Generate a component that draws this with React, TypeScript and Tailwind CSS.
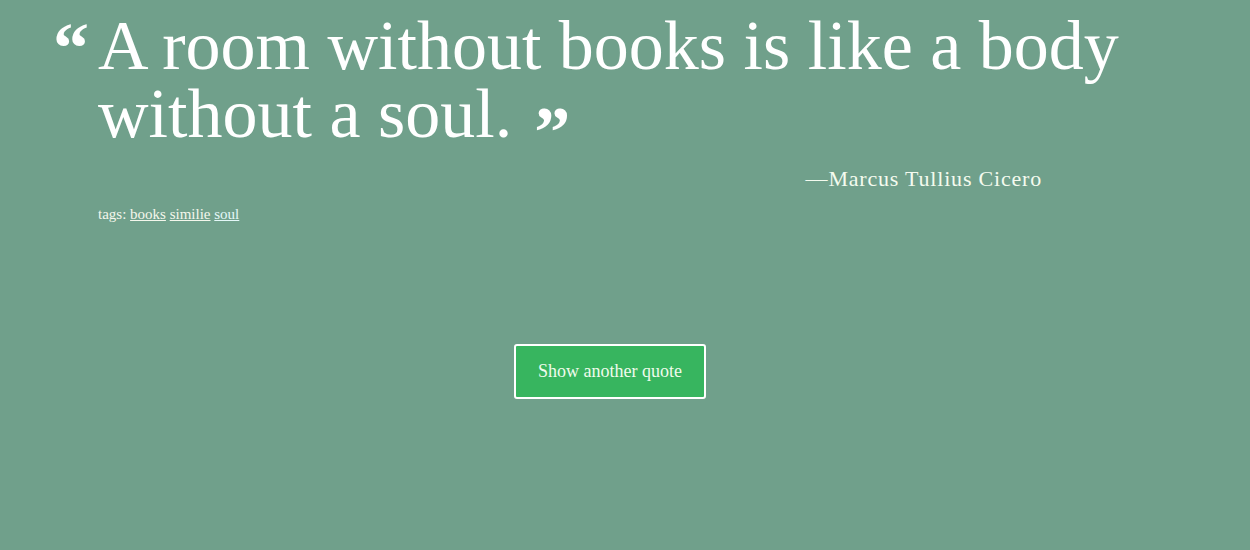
export default function App() {
  return (
    <div className="min-h-[550px] w-full bg-[#70a08b] text-white font-['Liberation_Serif',serif]">
      {/* quote block */}
      <div className="pl-[53px] pt-[12px]">
        <div className="flex items-start">
          <span className="w-[45px] shrink-0 text-[72px] leading-[72px] font-bold">&ldquo;</span>
          <p className="text-[70px] leading-[68px]">
            A room without books is like a body
            <br />
            without a soul.
            <span className="ml-[22px] inline-block align-top text-[72px] leading-[72px] font-bold translate-y-[16px]">&rdquo;</span>
          </p>
        </div>
        <div className="w-[989px] text-right text-[22px] tracking-[0.8px] text-[#f4fbef] mt-[10px]">
          &mdash;Marcus Tullius Cicero
        </div>
        <div className="pl-[45px] mt-[8px] text-[15px] text-[#f4f7ec]">
          tags: <a className="underline">books</a> <a className="underline">similie</a>{" "}
          <a className="underline text-[#e4f8f8]">soul</a>
        </div>
      </div>

      {/* action */}
      <div className="flex justify-center pt-[118px] pr-[30px]">
        <button className="h-[55px] w-[192px] rounded-[3px] border-2 border-white bg-[#37b55f] text-[18px] text-[#f0fbec]">
          Show another quote
        </button>
      </div>
    </div>
  );
}
